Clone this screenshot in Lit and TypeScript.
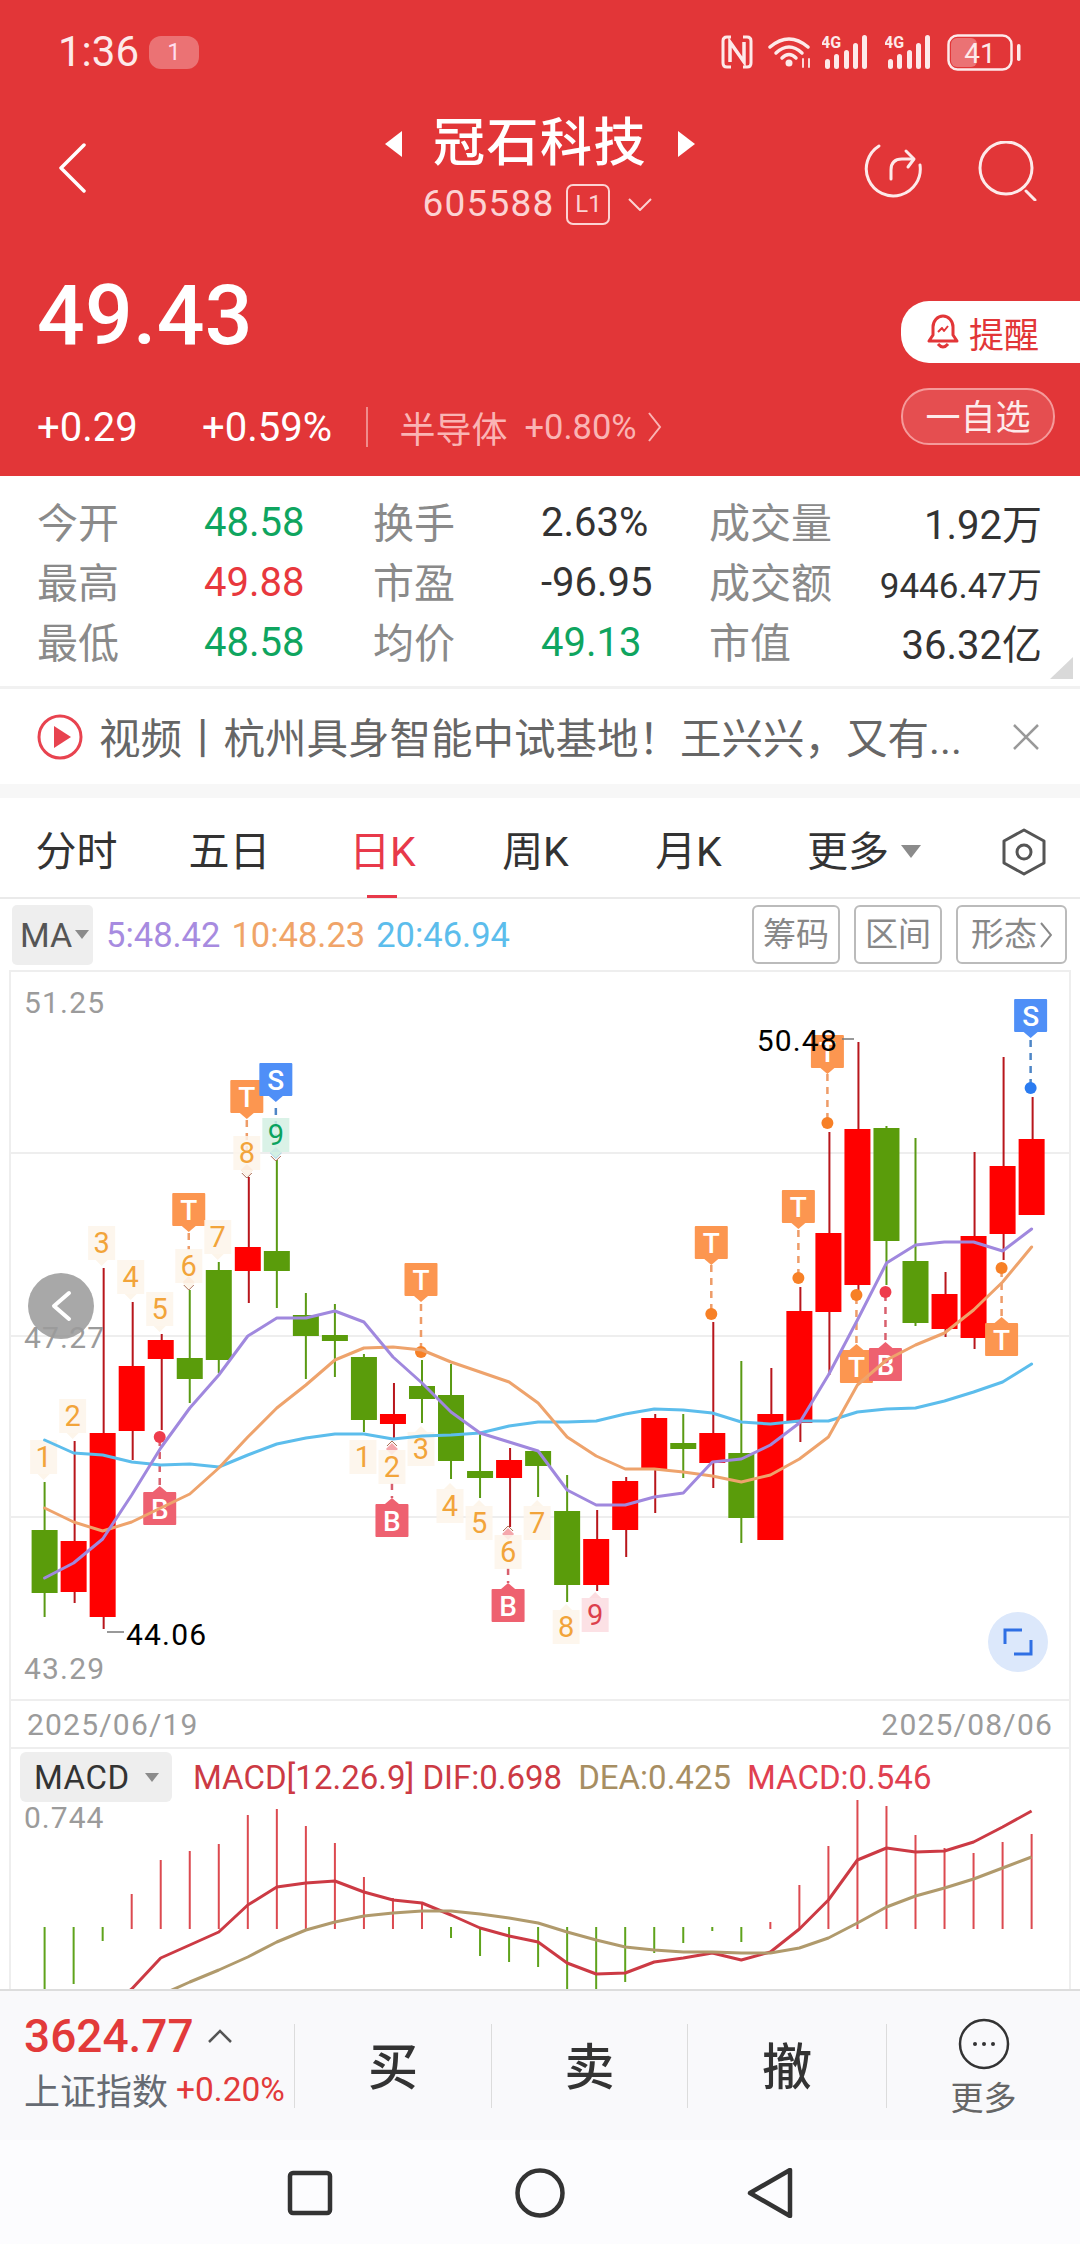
import { LitElement, html, css, svg } from "lit";
import { customElement } from "lit/decorators.js";

const X = (i: number) => 43.6 + 29.03 * i;

type C = [number, number, number, number, "r" | "g"];
const CANDLES: C[] = [
  [1482, 1530, 1593, 1617, "g"], [1441, 1541, 1592, 1603, "r"], [1268, 1433, 1617, 1629, "r"],
  [1302, 1366, 1431, 1460, "r"], [1334, 1340, 1359, 1430, "r"], [1290, 1358, 1379, 1403, "g"],
  [1262, 1270, 1360, 1373, "g"], [1177, 1247, 1271, 1303, "r"], [1160, 1251, 1271, 1308, "g"],
  [1293, 1315, 1336, 1379, "g"], [1304, 1335, 1341, 1377, "g"], [1354, 1357, 1420, 1432, "g"],
  [1383, 1414, 1424, 1438, "r"], [1360, 1386, 1399, 1423, "g"], [1364, 1395, 1461, 1479, "g"],
  [1433, 1471, 1478, 1498, "g"], [1448, 1460, 1478, 1527, "r"], [1451, 1451, 1466, 1497, "g"],
  [1475, 1511, 1585, 1602, "g"], [1510, 1539, 1585, 1591, "r"], [1477, 1481, 1530, 1557, "r"],
  [1414, 1418, 1469, 1513, "r"], [1414, 1443, 1449, 1478, "g"], [1322, 1433, 1463, 1488, "r"],
  [1361, 1453, 1518, 1543, "g"], [1368, 1414, 1540, 1540, "r"], [1287, 1311, 1423, 1442, "r"],
  [1132, 1233, 1312, 1375, "r"], [1042, 1129, 1285, 1290, "r"], [1126, 1128, 1241, 1285, "g"],
  [1138, 1261, 1323, 1326, "g"], [1272, 1294, 1329, 1337, "r"], [1152, 1236, 1338, 1349, "r"],
  [1057, 1166, 1234, 1260, "r"], [1097, 1139, 1215, 1215, "r"],
];
const MA5 = [1578, 1563, 1539, 1495, 1448, 1408, 1375, 1336, 1318, 1318, 1311, 1322, 1357, 1383, 1412, 1433, 1442, 1451, 1490, 1505, 1505, 1497, 1493, 1462, 1459, 1445, 1423, 1375, 1320, 1263, 1245, 1242, 1242, 1251, 1229];
const MA10 = [1508, 1522, 1531, 1522, 1508, 1494, 1468, 1437, 1408, 1385, 1360, 1348, 1347, 1350, 1362, 1372, 1382, 1403, 1437, 1456, 1469, 1469, 1472, 1476, 1482, 1475, 1459, 1437, 1385, 1360, 1345, 1333, 1310, 1282, 1247];
const MA20 = [1440, 1453, 1455, 1462, 1465, 1464, 1467, 1455, 1444, 1438, 1434, 1434, 1439, 1436, 1435, 1433, 1426, 1422, 1422, 1421, 1414, 1409, 1410, 1413, 1422, 1424, 1421, 1421, 1412, 1409, 1408, 1401, 1392, 1382, 1364];
const DIF = [2060, 2040, 2012, 1989, 1958, 1945, 1932, 1905, 1887, 1883, 1881, 1892, 1900, 1903, 1915, 1928, 1936, 1942, 1963, 1974, 1973, 1962, 1958, 1953, 1960, 1952, 1929, 1900, 1860, 1848, 1852, 1851, 1842, 1827, 1811];
const DEA = [2040, 2030, 2020, 2010, 1995, 1982, 1970, 1957, 1942, 1930, 1922, 1916, 1913, 1911, 1911, 1914, 1918, 1923, 1932, 1940, 1947, 1950, 1952, 1952, 1953, 1953, 1948, 1938, 1923, 1907, 1896, 1888, 1879, 1868, 1857];
// MACD histogram end-point for each bar (zero line at 1929)
const HIST = [1995, 1984, 1941, 1894, 1860, 1851, 1844, 1815, 1809, 1826, 1843, 1877, 1898, 1903, 1938, 1956, 1962, 1967, 1995, 1995, 1982, 1953, 1943, 1931, 1942, 1922, 1885, 1846, 1800, 1806, 1835, 1848, 1853, 1842, 1834];

const pts = (a: number[]) => a.map((y, i) => `${X(i).toFixed(1)},${y}`).join(" ");

type Kind = "T" | "S" | "B";
const FLAG_CLASS: Record<Kind, string> = { T: "f-t", S: "f-s", B: "f-b" };
// [candle, box top, dash start, dash end, dot y | null, letter, pointer side]
const FLAGS: [number, number, number, number, number | null, Kind, "down" | "up"][] = [
  [5, 1193, 1233, 1250, null, "T", "down"],
  [7, 1080, 1120, 1150, null, "T", "down"],
  [8, 1063, 1108, 1135, null, "S", "down"],
  [13, 1263, 1304, 1350, 1352, "T", "down"],
  [23, 1226, 1265, 1312, 1314, "T", "down"],
  [26, 1190, 1230, 1276, 1278, "T", "down"],
  [27, 1035, 1074, 1121, 1123, "T", "down"],
  [34, 999, 1040, 1086, 1088, "S", "down"],
  [28, 1350, 1297, 1344, 1295, "T", "up"],
  [29, 1348, 1294, 1342, 1292, "B", "up"],
  [33, 1323, 1270, 1317, 1268, "T", "up"],
  [4, 1492, 1439, 1486, 1437, "B", "up"],
  [12, 1504, 1483, 1498, null, "B", "up"],
  [16, 1589, 1568, 1583, null, "B", "up"],
];
// [candle, number centre y, digit, colour kind, pointer side]
const NUMS: [number, number, string, string, string][] = [
  [0, 1457, "1", "o", "down"], [1, 1416, "2", "o", "down"], [2, 1243, "3", "o", "down"],
  [3, 1277, "4", "o", "down"], [4, 1309, "5", "o", "down"], [5, 1266, "6", "o", "down"],
  [6, 1237, "7", "o", "down"], [7, 1153, "8", "o", "down"], [8, 1135, "9", "g", "down"],
  [11, 1457, "1", "o", "none"], [12, 1467, "2", "o", "none"], [13, 1449, "3", "o", "up"],
  [14, 1506, "4", "o", "up"], [15, 1523, "5", "o", "up"], [16, 1552, "6", "o", "none"],
  [17, 1523, "7", "o", "up"], [18, 1627, "8", "o", "up"], [19, 1615, "9", "r", "up"],
];
// [candle, y, kind, chevron below?]
const DIAMONDS: [number, number, string, boolean][] = [
  [5, 1282, "d-o", true], [7, 1170, "d-o", true], [8, 1153, "d-b", true],
  [12, 1449, "d-r", false], [16, 1534, "d-r", false],
];

@customElement("kline-chart")
class KlineChart extends LitElement {
  static styles = css`
    :host { display: block; }
    svg { display: block; font-family: Roboto, "Noto Sans CJK SC", sans-serif; }
    .grid { stroke: #eeeeee; stroke-width: 2; }
    .axis { font-size: 30px; fill: #9b9b9b; letter-spacing: 1.2px; }
    .ext { font-size: 30px; fill: #000; letter-spacing: 1.2px; }
    .ext-dash { stroke: #777; stroke-width: 1.5; }
    .wick-r { fill: #b8161c; } .wick-g { fill: #5a9a14; }
    .body-r { fill: #ff0000; } .body-g { fill: #5a9c0b; }
    .line { fill: none; stroke-width: 3; stroke-linejoin: round; stroke-linecap: round; }
    .ma5 { stroke: #a088de; } .ma10 { stroke: #eea36c; } .ma20 { stroke: #5cbdec; }
    .f-t { fill: #fc9650; } .f-s { fill: #4f8ff7; } .f-b { fill: #ee6170; }
    .dash-T { stroke: #ee9c68; } .dash-S { stroke: #4e86c6; } .dash-B { stroke: #d8606e; }
    .dash { stroke-width: 2.5; stroke-dasharray: 7 6; }
    .dot-T { fill: #f78026; } .dot-S { fill: #2a7bf0; } .dot-B { fill: #ee3c4c; }
    .flag-text { font-size: 28px; font-weight: 500; fill: #fff; text-anchor: middle; }
    .num { font-size: 29px; text-anchor: middle; }
    .n-o { fill: #f2a43a; } .nb-o { fill: #fdf5ea; }
    .n-g { fill: #0aa35f; } .nb-g { fill: #d3f0e3; }
    .n-r { fill: #dc3f4c; } .nb-r { fill: #fcdce0; }
    .d-o { fill: #f6c4a4; } .d-b { fill: #a9cfe6; } .d-r { fill: #f5a7ac; }
    .chev { fill: none; stroke: #a86a50; stroke-width: 1; }
    .back { fill: #8f8f8f; opacity: .78; }
    .back-chev { fill: none; stroke: #fff; stroke-width: 4; stroke-linecap: round; stroke-linejoin: round; }
    .expand { fill: #dce8fb; }
    .expand-mark { fill: none; stroke: #2f6fe4; stroke-width: 3; }
  `;
  render() {
    const grid = [1153, 1336, 1517].map((y) => svg`<line class="grid" x1="10" x2="1070" y1=${y} y2=${y}></line>`);
    const candles = CANDLES.map(([h, t, b, l, c], i) => {
      const x = X(i);
      return svg`<rect class="wick-${c}" x=${x - 1 + (c === "r" ? 1 : 0)} y=${h} width="2" height=${l - h}></rect>
        <rect class="body-${c}" x=${x - 13} y=${t} width="26" height=${b - t}></rect>`;
    });
    const flags = FLAGS.map(([i, top, d1, d2, dot, k, side]) => {
      const x = X(i) - 1;
      const tip = side === "down"
        ? `${x - 7},${top + 33} ${x + 7},${top + 33} ${x},${top + 39}`
        : `${x - 7},${top} ${x + 7},${top} ${x},${top - 6}`;
      return svg`<line class="dash dash-${k}" x1=${x} x2=${x} y1=${d1} y2=${d2}></line>
        ${dot !== null ? svg`<circle class="dot-${k}" cx=${x} cy=${dot} r="6"></circle>` : ""}
        <rect class=${FLAG_CLASS[k]} x=${x - 16.5} y=${top} width="33" height="33" rx="1"></rect>
        <polygon class=${FLAG_CLASS[k]} points=${tip}></polygon>
        <text class="flag-text" x=${x} y=${top + 27}>${k}</text>`;
    });
    const nums = NUMS.map(([i, cy, n, k, side]) => {
      const x = X(i) - 1;
      const tip = side === "down"
        ? `${x - 6},${cy + 17} ${x + 6},${cy + 17} ${x},${cy + 23}`
        : side === "up" ? `${x - 6},${cy - 17} ${x + 6},${cy - 17} ${x},${cy - 23}` : "";
      return svg`<rect class="nb-${k}" x=${x - 13.5} y=${cy - 17} width="27" height="34" opacity=".85"></rect>
        ${tip ? svg`<polygon class="nb-${k}" points=${tip}></polygon>` : ""}
        <text class="num n-${k}" x=${x} y=${cy + 10}>${n}</text>`;
    });
    const diamonds = DIAMONDS.map(([i, y, k, below]) => {
      const x = X(i) - 1;
      return svg`<polygon class=${k} points="${x},${y - 6} ${x + 6},${y} ${x},${y + 6} ${x - 6},${y}"></polygon>
        <polyline class="chev" points=${below ? `${x - 5},${y + 3} ${x},${y + 8} ${x + 5},${y + 3}` : `${x - 5},${y - 3} ${x},${y - 8} ${x + 5},${y - 3}`}></polyline>`;
    });
    return html`<svg width="1060" height="727" viewBox="10 972 1060 727">
      ${grid}
      ${candles}
      ${flags}
      ${diamonds}
      ${nums}
      <polyline class="line ma20" points=${pts(MA20)}></polyline>
      <polyline class="line ma10" points=${pts(MA10)}></polyline>
      <polyline class="line ma5" points=${pts(MA5)}></polyline>
      <text class="axis" x="23" y="1013">51.25</text>
      <text class="axis" x="23" y="1679">43.29</text>
      <circle class="back" cx="60" cy="1306" r="33"></circle>
      <polyline class="back-chev" points="68,1293 53,1306 68,1319"></polyline>
      <text class="axis" x="23" y="1348">47.27</text>
      <text class="ext" x="837" y="1051" text-anchor="end">50.48</text>
      <line class="ext-dash" x1="841" x2="853" y1="1039" y2="1039"></line>
      <text class="ext" x="125" y="1645">44.06</text>
      <line class="ext-dash" x1="106" x2="123" y1="1632" y2="1632"></line>
      <circle class="expand" cx="1017" cy="1642" r="30"></circle>
      <polyline class="expand-mark" points="1004,1644 1004,1630 1021,1630"></polyline>
      <polyline class="expand-mark" points="1013,1654 1030,1654 1030,1640"></polyline>
    </svg>`;
  }
}

@customElement("macd-chart")
class MacdChart extends LitElement {
  static styles = css`
    :host { display: block; }
    svg { display: block; font-family: Roboto, "Noto Sans CJK SC", sans-serif; }
    .axis { font-size: 30px; fill: #9b9b9b; letter-spacing: 1px; }
    .up { fill: #dc4a50; } .down { fill: #5fa31c; }
    .line { fill: none; stroke-width: 3; stroke-linejoin: round; }
    .dif { stroke: #cc3a44; } .dea { stroke: #b09a6c; }
  `;
  render() {
    const bars = HIST.map((y, i) => {
      const x = X(i) - 1;
      return y < 1929
        ? svg`<rect class="up" x=${x} y=${y} width="2" height=${1929 - y}></rect>`
        : svg`<rect class="down" x=${x} y="1927" width="2" height=${y - 1927}></rect>`;
    });
    return html`<svg width="1060" height="191" viewBox="10 1798 1060 191">
      <text class="axis" x="23" y="1828">0.744</text>
      ${bars}
      <polyline class="line dif" points=${pts(DIF)}></polyline>
      <polyline class="line dea" points=${pts(DEA)}></polyline>
    </svg>`;
  }
}

@customElement("app-root")
class AppRoot extends LitElement {
  static styles = css`
    :host {
      display: block; width: 1080px; height: 2244px; overflow: hidden; background: #fff;
      font-family: Roboto, "Noto Sans CJK SC", sans-serif; color: #333;
    }
    svg { display: block; }
    /* red header */
    .head { height: 476px; background: #e23638; color: #fff; display: flex; flex-direction: column; }
    .status { height: 104px; flex: none; display: flex; align-items: center; padding: 0 59px 0 58px; }
    .time { font-size: 42px; color: #fdeaea; line-height: 42px; }
    .badge { margin-left: 10px; width: 50px; height: 33px; border-radius: 12px; background: rgba(255,255,255,.3); font-size: 24px; line-height: 33px; text-align: center; color: #fde; }
    .status-r { margin-left: auto; display: flex; align-items: center; gap: 0; }
    .sig-a { margin-left: 9px; } .sig-b { margin-left: 13px; }
    .ic-wifi { margin-left: 14px; } .ic-bat { margin-left: 12px; }
    .nav { height: 128px; flex: none; display: grid; grid-template-columns: 300px 480px 300px; }
    .nav-l { padding: 39px 0 0 58px; }
    .nav-c { display: flex; flex-direction: column; align-items: center; }
    .title-row { display: flex; align-items: center; height: 72px; margin-top: 4px; gap: 30px; }
    .title { font-size: 52px; font-weight: 500; line-height: 72px; letter-spacing: 1.5px; color: #fff; }
    .code-row { display: flex; align-items: center; height: 44px; margin-top: 2px; color: #fcd3d3; padding-right: 5px; }
    .code { font-size: 37px; letter-spacing: 1.2px; line-height: 44px; }
    .l1 { margin-left: 12px; width: 44px; height: 41px; box-sizing: border-box; border: 2px solid #fcd3d3; border-radius: 7px; font-size: 24px; line-height: 37px; text-align: center; }
    .code-chev { margin-left: 18px; }
    .nav-r { display: flex; justify-content: flex-end; align-items: flex-start; padding: 37px 42px 0 0; gap: 55px; }
    .quote { flex: 1; display: flex; justify-content: space-between; }
    .quote-l { padding-left: 37px; }
    .price { margin-top: 40px; font-size: 84px; line-height: 88px; font-weight: 500; letter-spacing: .3px; }
    .chg { margin-top: 45px; display: flex; align-items: center; height: 44px; font-size: 40px; white-space: nowrap; }
    .chg-a { width: 165px; }
    .chg-b { width: 164px; }
    .sep { width: 1.5px; height: 40px; background: #f08c8c; }
    .sector { margin-left: 32px; color: #fab4b4; font-size: 36px; }
    .sector-p { margin-left: 17px; color: #fab4b4; font-size: 34.5px; }
    .sector-c { margin-left: 10px; }
    .quote-r { width: 179px; padding-top: 69px; }
    .remind { height: 62px; background: #fff; border-radius: 28px 0 0 28px; display: flex; align-items: center; padding-left: 25px; color: #e23638; font-size: 35px; gap: 9px; }
    .fav { margin-top: 25px; width: 154px; height: 57px; box-sizing: border-box; border: 2px solid #f59a9a; border-radius: 28px; background: rgba(255,255,255,.12); color: #fdeaea; font-size: 35px; line-height: 57px; text-align: center; }
    /* stats */
    .stats { position: relative; box-sizing: border-box; padding: 16px 38px 0 37px; display: grid; grid-template-columns: 167px 169px 168px 168px 170px 163px; grid-auto-rows: 60px; align-items: center; font-size: 40px; border-bottom: 3px solid #f1f1f1; height: 213px; white-space: nowrap; }
    .lb { color: #8a8a8a; margin-bottom: 5px; font-size: 41px; }
    .green { color: #0fa55f; } .red { color: #e8383d; } .dark { color: #333; }
    .right { text-align: right; }
    .small { font-size: 35px; }
    .corner { position: absolute; right: 7px; bottom: 7px; width: 0; height: 0; border-left: 23px solid transparent; border-bottom: 22px solid #d9d9d9; }
    /* news */
    .news { height: 95px; display: flex; align-items: center; padding: 0 40px 0 37px; color: #666; font-size: 41.5px; white-space: nowrap; }
    .news-t { margin-left: 16px; flex: 1; margin-bottom: 2px; }
    .gap { height: 14px; background: #f7f7f7; }
    /* tabs */
    .tabs { display: flex; align-items: center; padding-top: 8px; box-sizing: border-box; border-bottom: 2px solid #eaeaea; height: 101px; font-size: 41px; color: #333; }
    .tab { width: 153px; text-align: center; line-height: 50px; position: relative; height: 50px; }
    .tab.active { color: #e8394a; }
    .tab.active::after { content: ""; position: absolute; left: 61px; width: 30px; height: 3px; background: #e8394a; bottom: -21px; }
    .tab-more { display: flex; align-items: center; padding-left: 42px; gap: 12px; line-height: 50px; }
    .caret { width: 0; height: 0; border-left: 10px solid transparent; border-right: 10px solid transparent; border-top: 13px solid #8b8b8b; }
    .hex { margin-left: auto; padding-right: 33px; }
    /* ma row */
    .ma-row { height: 71px; box-sizing: border-box; display: flex; align-items: center; padding: 0 13px 0 12px; }
    .ma-btn { width: 81px; height: 60px; box-sizing: border-box; background: #eeeeee; border-radius: 5px; display: flex; align-items: center; padding-left: 8px; gap: 3px; font-size: 34px; color: #555; }
    .caret-s { width: 0; height: 0; border-left: 7px solid transparent; border-right: 7px solid transparent; border-top: 9px solid #8b8b8b; }
    .ma-leg { margin-left: 13px; display: flex; gap: 11px; font-size: 34.5px; }
    .c5 { color: #a78be0; } .c10 { color: #f0a468; } .c20 { color: #5cbdec; }
    .tools { margin-left: auto; display: flex; gap: 14px; }
    .tool { height: 59px; width: 88px; box-sizing: border-box; border: 2px solid #bbb; border-radius: 6px; font-size: 33px; line-height: 55px; text-align: center; color: #888; }
    .tool.wide { width: 111px; display: flex; align-items: center; justify-content: center; gap: 3px; }
    /* chart frame */
    .frame { margin: 0 9px; border: 2px solid #eeeeee; border-bottom: 0; }
    .dates { height: 46px; border-top: 2px solid #eeeeee; border-bottom: 2px solid #eeeeee; display: flex; justify-content: space-between; align-items: center; padding: 0 16px; font-size: 30px; color: #9b9b9b; letter-spacing: 1.2px; }
    .macd-head { height: 49px; box-sizing: border-box; display: flex; align-items: flex-start; padding: 3px 0 0 9px; font-size: 33px; white-space: nowrap; }
    .macd-btn { flex: none; width: 152px; height: 50px; box-sizing: border-box; background: #eeeeee; border-radius: 6px; display: flex; align-items: center; padding-left: 14px; gap: 15px; color: #333; letter-spacing: .5px; }
    .macd-leg { margin-left: 21px; height: 50px; line-height: 52px; display: flex; gap: 16px; }
    .l-dif { color: #cc3a44; } .l-dea { color: #a78e62; } .l-macd { color: #e04050; }
    /* footer */
    .foot { height: 151px; box-sizing: border-box; border-top: 2px solid #dddddd; background: #f9f9fb; display: flex; padding-top: 33px; align-items: flex-start; }
    .idx { width: 294px; box-sizing: border-box; padding-left: 24px; margin-top: -5px; white-space: nowrap; }
    .idx-top { display: flex; height: 34px; align-items: center; gap: 14px; font-size: 46px; font-weight: 500; color: #e23a3a; line-height: 34px; }
    .idx-bot { margin-top: 19px; display: flex; align-items: center; height: 34px; gap: 8px; font-size: 36px; color: #666b73; }
    .idx-pct { font-size: 33.5px; color: #e23a3a; }
    .act { height: 84px; border-left: 1.5px solid #dcdcdc; box-sizing: border-box; display: flex; align-items: center; justify-content: center; font-size: 50px; font-weight: 500; color: #333; padding-bottom: 6px; }
    .w1 { width: 197px; } .w2 { width: 196px; } .w3 { width: 199px; }
    .more { width: 194px; height: 84px; border-left: 1.5px solid #dcdcdc; box-sizing: border-box; display: flex; flex-direction: column; align-items: center; }
    .more-ic { flex: none; margin-top: -6px; }
    .more-t { flex: none; margin-top: 12px; font-size: 33px; line-height: 34px; color: #666; }
    .bar { height: 104px; background: #fcfcfe; display: flex; justify-content: center; align-items: center; padding-top: 1px; box-sizing: border-box; }
    .bar-i { width: 230px; display: flex; justify-content: center; }
  `;

  private signal() {
    return html`<svg width="50" height="36" viewBox="0 0 50 36">
      <text x="-1" y="14" font-size="16" font-weight="700" fill="#fdeaea" font-family="Roboto, sans-serif">4G</text>
      <g fill="#fdeaea">
        <rect x="3" y="25" width="5" height="10" rx="2.5"></rect>
        <rect x="12" y="20" width="5" height="15" rx="2.5"></rect>
        <rect x="22" y="16" width="5" height="19" rx="2.5"></rect>
        <rect x="31" y="9" width="5" height="26" rx="2.5"></rect>
        <rect x="40" y="1" width="5" height="34" rx="2.5"></rect>
      </g>
    </svg>`;
  }

  render() {
    return html`
      <section class="head">
        <div class="status">
          <span class="time">1:36</span>
          <span class="badge">1</span>
          <div class="status-r">
            <svg width="32" height="34" viewBox="0 0 32 34" fill="none" stroke="#fdeaea" stroke-width="3">
              <path d="M10 2H6Q2 2 2 6V28Q2 32 6 32H10M22 2H26Q30 2 30 6V28Q30 32 26 32H22"></path>
              <path d="M9 27V7L23 27V7" stroke-width="3.5"></path>
            </svg>
            <svg class="ic-wifi" width="46" height="34" viewBox="0 0 46 34" fill="none" stroke="#fdeaea" stroke-width="3.5" stroke-linecap="round">
              <path d="M3 12Q22 -4 41 12"></path>
              <path d="M9 18Q22 6 35 18"></path>
              <path d="M15 23Q22 16 29 23"></path>
              <circle cx="22" cy="28" r="3.5" fill="#fdeaea" stroke="none"></circle>
              <path d="M36 24V32M42 24V32" stroke-width="1.8"></path>
            </svg>
            <span class="sig-a">${this.signal()}</span>
            <span class="sig-b">${this.signal()}</span>
            <svg class="ic-bat" width="74" height="37" viewBox="0 0 74 37">
              <rect x="1.5" y="1.5" width="63" height="34" rx="9" fill="none" stroke="#fdeaea" stroke-width="2.5"></rect>
              <rect x="4" y="4" width="26" height="29" rx="6" fill="rgba(255,255,255,.3)"></rect>
              <text x="33" y="29" text-anchor="middle" font-size="28" font-family="Roboto, sans-serif" fill="#fdeaea">41</text>
              <rect x="70" y="10" width="3.5" height="17" rx="1.7" fill="#fdeaea"></rect>
            </svg>
          </div>
        </div>
        <div class="nav">
          <div class="nav-l">
            <svg width="28" height="50" viewBox="0 0 28 50" fill="none" stroke="#fff" stroke-width="3.5" stroke-linecap="round" stroke-linejoin="round">
              <polyline points="26,2 3,25 26,48"></polyline>
            </svg>
          </div>
          <div class="nav-c">
            <div class="title-row">
              <svg width="19" height="26" viewBox="0 0 19 26"><polygon points="18,0 18,26 1,13" fill="#fff"></polygon></svg>
              <span class="title">冠石科技</span>
              <svg width="19" height="26" viewBox="0 0 19 26"><polygon points="1,0 1,26 18,13" fill="#fff"></polygon></svg>
            </div>
            <div class="code-row">
              <span class="code">605588</span>
              <span class="l1">L1</span>
              <svg class="code-chev" width="24" height="13" viewBox="0 0 24 13" fill="none" stroke="#fcd3d3" stroke-width="2"><polyline points="1,1 12,12 23,1"></polyline></svg>
            </div>
          </div>
          <div class="nav-r">
            <svg width="60" height="60" viewBox="0 0 60 60" fill="none" stroke="#fdeaea" stroke-width="3" stroke-linecap="round" stroke-linejoin="round">
              <path d="M16 5A27 27 0 1 0 57 24"></path>
              <path d="M28 38V29Q28 18 39 18H50"></path>
              <polyline points="43,10 51,18 45,26"></polyline>
            </svg>
            <svg width="60" height="60" viewBox="0 0 60 60" fill="none" stroke="#fdeaea" stroke-width="3" stroke-linecap="round">
              <circle cx="28" cy="27" r="26"></circle>
              <path d="M48 50L57 59"></path>
            </svg>
          </div>
        </div>
        <div class="quote">
          <div class="quote-l">
            <div class="price">49.43</div>
            <div class="chg">
              <span class="chg-a">+0.29</span>
              <span class="chg-b">+0.59%</span>
              <span class="sep"></span>
              <span class="sector">半导体</span>
              <span class="sector-p">+0.80%</span>
              <svg class="sector-c" width="15" height="32" viewBox="0 0 15 32" fill="none" stroke="#fab4b4" stroke-width="2"><polyline points="2,2 13,16 2,30"></polyline></svg>
            </div>
          </div>
          <div class="quote-r">
            <div class="remind">
              <svg width="34" height="36" viewBox="0 0 34 36" fill="none" stroke="#e23638" stroke-width="3" stroke-linejoin="round">
                <path d="M3 27H31L27 21V13A10 11 0 0 0 7 13V21Z"></path>
                <path d="M12 30Q17 36 22 30"></path>
                <polyline points="12,18 16,14 18,17 22,12" stroke-width="2"></polyline>
              </svg>
              <span>提醒</span>
            </div>
            <div class="fav">一自选</div>
          </div>
        </div>
      </section>

      <section class="stats">
        <span class="lb">今开</span><span class="green">48.58</span><span class="lb">换手</span><span class="dark">2.63%</span><span class="lb">成交量</span><span class="dark right">1.92万</span>
        <span class="lb">最高</span><span class="red">49.88</span><span class="lb">市盈</span><span class="dark">-96.95</span><span class="lb">成交额</span><span class="dark right small">9446.47万</span>
        <span class="lb">最低</span><span class="green">48.58</span><span class="lb">均价</span><span class="green">49.13</span><span class="lb">市值</span><span class="dark right">36.32亿</span>
        <i class="corner"></i>
      </section>

      <section class="news">
        <svg width="46" height="46" viewBox="0 0 46 46">
          <circle cx="23" cy="23" r="21" fill="none" stroke="#e8434f" stroke-width="3"></circle>
          <polygon points="17,12 34,23 17,34" fill="#e8434f"></polygon>
        </svg>
        <span class="news-t">视频丨杭州具身智能中试基地！王兴兴，又有...</span>
        <svg width="28" height="26" viewBox="0 0 28 26" fill="none" stroke="#999" stroke-width="2.5"><path d="M2 1L26 25M26 1L2 25"></path></svg>
      </section>
      <div class="gap"></div>

      <nav class="tabs">
        <span class="tab">分时</span>
        <span class="tab">五日</span>
        <span class="tab active">日K</span>
        <span class="tab">周K</span>
        <span class="tab">月K</span>
        <span class="tab-more">更多<i class="caret"></i></span>
        <span class="hex">
          <svg width="46" height="48" viewBox="0 0 46 48" fill="none" stroke="#555" stroke-width="3" stroke-linejoin="round">
            <polygon points="23,2 43,13 43,35 23,46 3,35 3,13"></polygon>
            <circle cx="23" cy="24" r="7"></circle>
          </svg>
        </span>
      </nav>

      <div class="ma-row">
        <div class="ma-btn">MA<i class="caret-s"></i></div>
        <div class="ma-leg">
          <span class="c5">5:48.42</span><span class="c10">10:48.23</span><span class="c20">20:46.94</span>
        </div>
        <div class="tools">
          <span class="tool">筹码</span>
          <span class="tool">区间</span>
          <span class="tool wide">形态
            <svg width="12" height="26" viewBox="0 0 12 26" fill="none" stroke="#888" stroke-width="2"><polyline points="1,1 11,13 1,25"></polyline></svg>
          </span>
        </div>
      </div>

      <div class="frame">
        <kline-chart></kline-chart>
        <div class="dates"><span>2025/06/19</span><span>2025/08/06</span></div>
        <div class="macd-head">
          <div class="macd-btn">MACD<i class="caret-s"></i></div>
          <div class="macd-leg">
            <span class="l-dif">MACD[12.26.9] DIF:0.698</span>
            <span class="l-dea">DEA:0.425</span>
            <span class="l-macd">MACD:0.546</span>
          </div>
        </div>
        <macd-chart></macd-chart>
      </div>

      <footer class="foot">
        <div class="idx">
          <div class="idx-top">3624.77
            <svg width="24" height="14" viewBox="0 0 24 14" fill="none" stroke="#555" stroke-width="2.5"><polyline points="1,13 12,2 23,13"></polyline></svg>
          </div>
          <div class="idx-bot">上证指数<span class="idx-pct">+0.20%</span></div>
        </div>
        <div class="act w1">买</div>
        <div class="act w2">卖</div>
        <div class="act w3">撤</div>
        <div class="more">
          <svg class="more-ic" width="52" height="52" viewBox="0 0 52 52" fill="none" stroke="#333" stroke-width="2.5">
            <circle cx="26" cy="26" r="24"></circle>
            <circle cx="17" cy="26" r="2" fill="#333" stroke="none"></circle>
            <circle cx="26" cy="26" r="2" fill="#333" stroke="none"></circle>
            <circle cx="35" cy="26" r="2" fill="#333" stroke="none"></circle>
          </svg>
          <span class="more-t">更多</span>
        </div>
      </footer>
      <div class="bar">
        <span class="bar-i"><svg width="46" height="46" viewBox="0 0 46 46" fill="none" stroke="#333" stroke-width="4.5"><rect x="3" y="3" width="40" height="40" rx="3"></rect></svg></span>
        <span class="bar-i"><svg width="50" height="50" viewBox="0 0 50 50" fill="none" stroke="#333" stroke-width="4.5"><circle cx="25" cy="25" r="22.5"></circle></svg></span>
        <span class="bar-i"><svg width="46" height="50" viewBox="0 0 46 50" fill="none" stroke="#333" stroke-width="4.5" stroke-linejoin="round"><polygon points="43,2 43,48 3,25"></polygon></svg></span>
      </div>
    `;
  }
}
